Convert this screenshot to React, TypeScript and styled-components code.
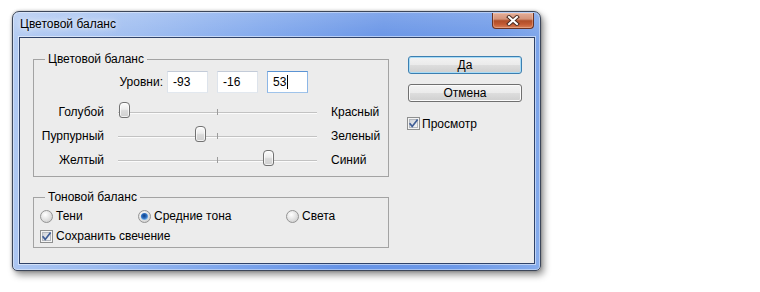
import React from 'react';
import styled, { createGlobalStyle } from 'styled-components';

const GlobalStyle = createGlobalStyle`
  html, body { margin: 0; padding: 0; background: #ffffff; }
  body {
    font-family: "Liberation Sans", Arial, sans-serif;
    font-size: 12px;
    color: #000;
  }
`;

const Page = styled.div`
  width: 760px;
  height: 292px;
  box-sizing: border-box;
  padding: 11px 0 0 12px;
`;

const Window = styled.div`
  box-sizing: border-box;
  width: 529px;
  height: 260px;
  display: flex;
  flex-direction: column;
  border: 1px solid #3c4659;
  border-radius: 7px 7px 5px 5px;
  background:
    linear-gradient(180deg, rgba(255, 255, 255, 0.18) 0%, rgba(255, 255, 255, 0) 12%),
    linear-gradient(100deg, #b3cbf2 0%, #9dbcf0 22%, #7ea6ec 45%, #6693e6 65%, #6d99e8 85%, #86acec 100%);
  box-shadow:
    inset 0 0 0 1px rgba(255, 255, 255, 0.4),
    3px 4px 7px rgba(0, 0, 0, 0.42),
    0 0 3px rgba(0, 0, 0, 0.3);
`;

const TitleBar = styled.div`
  height: 25px;
  flex: none;
  display: flex;
  align-items: flex-start;
  justify-content: space-between;
`;

const Title = styled.div`
  padding-left: 7px;
  line-height: 25px;
  color: #000;
  text-shadow: 0 0 8px rgba(255, 255, 255, 0.95), 0 0 4px rgba(255, 255, 255, 0.7);
`;

const CloseButton = styled.div`
  width: 42px;
  height: 16px;
  margin: 1px 6px 0 0;
  box-sizing: border-box;
  border: 1px solid #6a3224;
  border-top: none;
  border-radius: 0 0 4px 4px;
  background: linear-gradient(
    180deg,
    #e3ad98 0%,
    #d4947b 40%,
    #b04d28 52%,
    #c25a33 75%,
    #d98058 100%
  );
  box-shadow: inset 0 0 0 1px rgba(255, 220, 200, 0.35);
  display: flex;
  align-items: center;
  justify-content: center;
`;

const Client = styled.div`
  flex: 1;
  margin: 0 5px 6px 6px;
  border: 1px solid #2f4268;
  background: #ececec;
  box-shadow: 0 0 0 1px rgba(255, 255, 255, 0.5);
  display: flex;
  align-items: flex-start;
  padding: 14px 0 0 13px;
`;

const LeftColumn = styled.div`
  width: 356px;
  display: flex;
  flex-direction: column;
`;

const RightColumn = styled.div`
  margin: 4px 0 0 19px;
  width: 114px;
  display: flex;
  flex-direction: column;
`;

const GroupBox = styled.fieldset<{ $gap?: number; $padBottom: number }>`
  margin: ${(p) => p.$gap ?? 0}px 0 0 0;
  padding: 0 0 ${(p) => p.$padBottom}px 0;
  border: 1px solid #a3a3a3;
  min-width: 0;
`;

const Legend = styled.legend`
  margin-left: 11px;
  padding: 0 3px;
  line-height: 14px;
  font-size: 12px;
`;

const LevelsRow = styled.div`
  display: flex;
  align-items: center;
  margin-top: 5px;
`;

const LevelsLabel = styled.div`
  width: 133px;
  padding-right: 4px;
  box-sizing: border-box;
  text-align: right;
`;

const LevelBox = styled.div<{ $focused?: boolean }>`
  width: 41px;
  height: 22px;
  box-sizing: border-box;
  background: #fff;
  border: 1px solid;
  border-color: ${(p) =>
    p.$focused ? '#5b93d3 #8cb6e6 #9fc3ea #8cb6e6' : '#c3cbd8 #dde3eb #e2e8ef #dde3eb'};
  padding-left: 5px;
  line-height: 20px;
  display: flex;
  align-items: center;
  & + & {
    margin-left: 9px;
  }
`;

const Caret = styled.span`
  display: inline-block;
  width: 1px;
  height: 14px;
  margin-left: 1px;
  background: #000;
`;

const SliderRows = styled.div`
  margin-top: 7px;
  display: flex;
  flex-direction: column;
`;

const SliderRow = styled.div`
  height: 24px;
  display: flex;
  align-items: center;
`;

const SideLabel = styled.div`
  width: 70px;
  text-align: right;
`;

const RightLabel = styled.div`
  margin-left: 9px;
`;

const Track = styled.div`
  position: relative;
  width: 210px;
  height: 24px;
  margin-left: 8px;
  box-sizing: border-box;
  padding: 0 5px 0 6px;
  display: flex;
  align-items: center;
`;

const TrackLine = styled.div`
  position: relative;
  flex: 1;
  height: 1px;
  background: #c2c2c2;
  box-shadow: 0 1px 0 #fbfbfb;
`;

const Tick = styled.div`
  position: absolute;
  left: 99px;
  top: -3px;
  width: 1px;
  height: 6px;
  background: #9c9c9c;
`;

const Thumb = styled.div`
  position: absolute;
  top: 2px;
  width: 11px;
  height: 16px;
  box-sizing: border-box;
  border: 1px solid #727272;
  border-radius: 4px 4px 3px 3px;
  background: linear-gradient(180deg, #fdfdfd 0%, #ececec 45%, #dadada 55%, #d0d0d0 100%);
  box-shadow: inset 0 0 0 1px rgba(255, 255, 255, 0.7);
`;

const RadioRow = styled.div`
  margin-top: 2px;
  height: 20px;
  padding-left: 6px;
  display: grid;
  grid-template-columns: 98px 148px auto;
  align-items: center;
`;

const CheckRow = styled.div`
  height: 20px;
  padding-left: 6px;
  display: flex;
  align-items: center;
`;

const Option = styled.label`
  display: flex;
  align-items: center;
  gap: 3px;
  white-space: nowrap;
`;

const Button = styled.div<{ $default?: boolean }>`
  height: 18px;
  box-sizing: border-box;
  border: 1px solid ${(p) => (p.$default ? '#3c7fb1' : '#707070')};
  border-radius: 3px;
  background: linear-gradient(180deg, #f3f3f3 0%, #ebebeb 48%, #dddddd 52%, #cfcfcf 100%);
  box-shadow: inset 0 0 0 1px ${(p) => (p.$default ? '#a9dcf6' : '#fbfbfb')};
  display: flex;
  align-items: center;
  justify-content: center;
  & + & {
    margin-top: 10px;
  }
`;

const PreviewRow = styled.div`
  margin: 15px 0 0 -1px;
  height: 13px;
  display: flex;
  align-items: center;
  gap: 2px;
`;

const CheckBox = () => (
  <svg width="13" height="13" viewBox="0 0 13 13">
    <defs>
      <linearGradient id="cbFill" x1="0" y1="0" x2="1" y2="1">
        <stop offset="0" stopColor="#cdd1d7" />
        <stop offset="1" stopColor="#f7f7f7" />
      </linearGradient>
    </defs>
    <rect x="0.5" y="0.5" width="12" height="12" fill="#f4f4f4" stroke="#8e8f8f" />
    <rect x="2.5" y="2.5" width="8" height="8" fill="url(#cbFill)" stroke="#b4b8be" />
    <path d="M2.6 6.2 L5.2 9.4 L10.6 2.4" fill="none" stroke="#3f5d96" strokeWidth="1.7" />
  </svg>
);

const Radio = ({ checked }: { checked?: boolean }) => (
  <svg width="13" height="13" viewBox="0 0 13 13">
    <defs>
      <radialGradient id="rdOuter" cx="0.4" cy="0.35" r="0.7">
        <stop offset="0" stopColor="#ffffff" />
        <stop offset="1" stopColor="#cfcfcf" />
      </radialGradient>
      <radialGradient id="rdDot" cx="0.45" cy="0.4" r="0.6">
        <stop offset="0" stopColor="#0d3f86" />
        <stop offset="0.6" stopColor="#2f70c2" />
        <stop offset="1" stopColor="#8cc3f0" />
      </radialGradient>
    </defs>
    <circle cx="6.5" cy="6.5" r="6" fill="url(#rdOuter)" stroke="#949494" />
    {checked && <circle cx="6.5" cy="6.5" r="3.6" fill="url(#rdDot)" />}
  </svg>
);

const CloseGlyph = () => (
  <svg width="14" height="11" viewBox="0 0 14 11">
    <path d="M3 2 L11 9 M11 2 L3 9" stroke="#4a2a20" strokeWidth="4" strokeLinecap="square" />
    <path d="M3 2 L11 9 M11 2 L3 9" stroke="#ffffff" strokeWidth="2" strokeLinecap="square" />
  </svg>
);

const sliders = [
  { left: 'Голубой', right: 'Красный', value: -93 },
  { left: 'Пурпурный', right: 'Зеленый', value: -16 },
  { left: 'Желтый', right: 'Синий', value: 53 },
];

export default function App() {
  return (
    <Page>
      <GlobalStyle />
      <Window>
        <TitleBar>
          <Title>Цветовой баланс</Title>
          <CloseButton>
            <CloseGlyph />
          </CloseButton>
        </TitleBar>
        <Client>
          <LeftColumn>
            <GroupBox $padBottom={4}>
              <Legend>Цветовой баланс</Legend>
              <LevelsRow>
                <LevelsLabel>Уровни:</LevelsLabel>
                <LevelBox>-93</LevelBox>
                <LevelBox>-16</LevelBox>
                <LevelBox $focused>
                  53
                  <Caret />
                </LevelBox>
              </LevelsRow>
              <SliderRows>
                {sliders.map((s) => (
                  <SliderRow key={s.left}>
                    <SideLabel>{s.left}</SideLabel>
                    <Track>
                      <TrackLine>
                        <Tick />
                      </TrackLine>
                      <Thumb style={{ left: Math.round(98.6 + s.value * 0.985) }} />
                    </Track>
                    <RightLabel>{s.right}</RightLabel>
                  </SliderRow>
                ))}
              </SliderRows>
            </GroupBox>
            <GroupBox $gap={13} $padBottom={1}>
              <Legend>Тоновой баланс</Legend>
              <RadioRow>
                <Option>
                  <Radio />
                  Тени
                </Option>
                <Option>
                  <Radio checked />
                  Средние тона
                </Option>
                <Option>
                  <Radio />
                  Света
                </Option>
              </RadioRow>
              <CheckRow>
                <Option>
                  <CheckBox />
                  Сохранить свечение
                </Option>
              </CheckRow>
            </GroupBox>
          </LeftColumn>
          <RightColumn>
            <Button $default>Да</Button>
            <Button>Отмена</Button>
            <PreviewRow>
              <CheckBox />
              Просмотр
            </PreviewRow>
          </RightColumn>
        </Client>
      </Window>
    </Page>
  );
}
